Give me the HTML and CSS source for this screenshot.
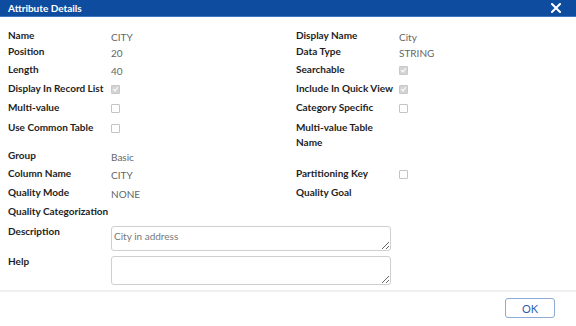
FILE: index.html
```html
<!DOCTYPE html>
<html>
<head>
<meta charset="utf-8">
<link rel="stylesheet" href="styles.css">
</head>
<body>
<div class="dialog">
  <div class="header">
    <span class="title">Attribute Details</span>
    <svg class="close" width="10" height="10" viewBox="0 0 10 10"><path d="M1 1L9 9M9 1L1 9" stroke="#fff" stroke-width="2" stroke-linecap="square"/></svg>
  </div>
  <div class="body">
    <div class="grid">
      <div class="lbl">Name</div><div class="val">CITY</div>
      <div class="lbl">Display Name</div><div class="val">City</div>

      <div class="lbl">Position</div><div class="val">20</div>
      <div class="lbl">Data Type</div><div class="val">STRING</div>

      <div class="lbl">Length</div><div class="val">40</div>
      <div class="lbl">Searchable</div><div class="val"><span class="cb on"></span></div>

      <div class="lbl">Display In Record List</div><div class="val"><span class="cb on"></span></div>
      <div class="lbl">Include In Quick View</div><div class="val"><span class="cb on"></span></div>

      <div class="lbl">Multi-value</div><div class="val"><span class="cb"></span></div>
      <div class="lbl">Category Specific</div><div class="val"><span class="cb"></span></div>

      <div class="lbl">Use Common Table</div><div class="val"><span class="cb"></span></div>
      <div class="lbl two">Multi-value Table<br>Name</div><div class="val"></div>

      <div class="lbl">Group</div><div class="val">Basic</div>
      <div class="lbl"></div><div class="val"></div>

      <div class="lbl">Column Name</div><div class="val">CITY</div>
      <div class="lbl">Partitioning Key</div><div class="val"><span class="cb"></span></div>

      <div class="lbl">Quality Mode</div><div class="val">NONE</div>
      <div class="lbl">Quality Goal</div><div class="val"></div>

      <div class="lbl">Quality Categorization</div><div class="val"></div>
      <div class="lbl"></div><div class="val"></div>

      <div class="lbl">Description</div>
      <div class="area-cell"><textarea class="area" readonly>City in address</textarea></div>

      <div class="lbl">Help</div>
      <div class="area-cell"><textarea class="area help" readonly></textarea></div>
    </div>
  </div>
  <div class="footer">
    <button class="ok">OK</button>
  </div>
</div>
</body>
</html>
```
FILE: styles.css
```css
html,body{margin:0;padding:0;background:#fff}
body{font-family:"Lato","Noto Sans",sans-serif;font-size:10px;color:#222;width:576px;height:326px;overflow:hidden}
.dialog{display:flex;flex-direction:column;height:326px}
.header{height:16px;background:#0e4c9f;border-bottom:1px solid #3f78c2;display:flex;align-items:center;justify-content:space-between;padding:0 15px 0 8px}
.title{color:#fff;font-weight:bold;font-size:10px}
.close{display:block}
.body{flex:1;padding:11px 8px 0 8px}
.grid{display:grid;grid-template-columns:103px 185px 103px 1fr;grid-template-rows:16px 18px 19px 19px 20px 28px 18px 19px 19px 20px 30px 32px}
.lbl{font-weight:bold;line-height:14px;white-space:nowrap;color:#1e1e1e}
.lbl.two{line-height:15px}
.val{color:#666;line-height:14px;padding-top:2px}
.cb{display:block;width:9px;height:9px;box-sizing:border-box;border:1px solid #c4c4c4;border-radius:1px;background:#fff;margin-top:2px;position:relative}
.cb.on{background:#d4d4d4;border-color:#c8c8c8}
.cb.on::after{content:"";position:absolute;left:2px;top:0px;width:2px;height:4px;border:solid #fff;border-width:0 1.5px 1.5px 0;transform:rotate(40deg)}
.area-cell{grid-column:span 3;padding-top:2px}
.area{display:block;width:280px;height:25px;box-sizing:border-box;border:1px solid #cfcfcf;border-radius:3px;font-family:"Lato","Noto Sans",sans-serif;font-size:10px;color:#777;padding:3px 2px 2px 2px;margin:0;resize:vertical;outline:none}
.help{height:29px}
.footer{height:36px;border-top:2px solid #f0f0f0;display:flex;justify-content:flex-end;align-items:flex-start;padding:6px 21px 0 0;box-sizing:border-box}
.ok{width:50px;height:20px;border:1px solid #8eaad6;border-radius:3px;background:#fff;color:#2f5fb3;font-family:"Lato","Noto Sans",sans-serif;font-size:11px;padding:0;margin:0}
```
